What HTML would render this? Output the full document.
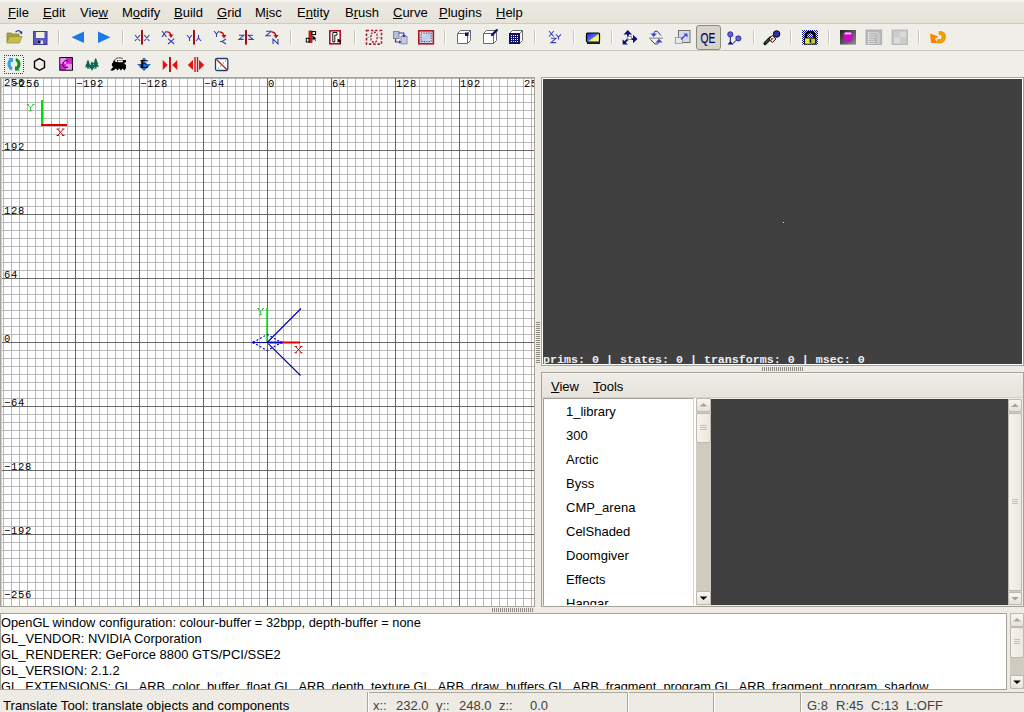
<!DOCTYPE html>
<html><head><meta charset="utf-8">
<style>
*{margin:0;padding:0;box-sizing:border-box}
html,body{width:1024px;height:712px;overflow:hidden;background:#eeebe5;font-family:"Liberation Sans",sans-serif;font-size:13px;color:#000}
.a{position:absolute}
#menubar{left:0;top:0;width:1024px;height:23px;background:linear-gradient(#ece9e2,#e5e2d9);border-top:2px solid #f4f2ec}
#menubar span,.mb span{position:absolute;line-height:16px;white-space:pre}
#menubar span{top:3px}
u{text-decoration:underline;text-underline-offset:1px;text-decoration-thickness:1px}
.tb{left:0;width:1024px;height:26px;background:#f0eee9}
.sep{position:absolute;width:2px;height:14px;border-left:1px solid #c5c2b8;border-right:1px solid #fff}
svg.ic{position:absolute;overflow:visible}
.gl{position:absolute;font-family:"Liberation Mono",monospace;font-size:10.5px;letter-spacing:0.7px;line-height:10px;height:10px;white-space:pre;color:#000}
.tl{position:absolute;left:22px;white-space:pre;line-height:16px}
.cl{position:absolute;left:0px;white-space:pre;line-height:16px;font-size:12.94px}
.sbb{border:1px solid #bdb9ae;border-radius:2px;background:linear-gradient(#f7f6f1,#e6e2d8)}
.sbt{border:1px solid #bdb9ae;border-radius:2px;background:linear-gradient(90deg,#f4f2ec,#ebe8df)}
.ti{position:absolute;left:566px;white-space:pre;line-height:16px}
.st{top:698px;white-space:pre;line-height:16px;color:#404040}
</style></head><body>
<div id="menubar" class="a">
<span style="left:8px"><u>F</u>ile</span>
<span style="left:43px"><u>E</u>dit</span>
<span style="left:80px">Vie<u>w</u></span>
<span style="left:122px">M<u>o</u>dify</span>
<span style="left:174px"><u>B</u>uild</span>
<span style="left:217px"><u>G</u>rid</span>
<span style="left:255px">M<u>i</u>sc</span>
<span style="left:297px">E<u>n</u>tity</span>
<span style="left:345px">B<u>r</u>ush</span>
<span style="left:393px"><u>C</u>urve</span>
<span style="left:439px"><u>P</u>lugins</span>
<span style="left:496px"><u>H</u>elp</span>
</div>
<div class="a" style="left:0;top:23px;width:1024px;height:1px;background:#cfccc2"></div>
<div id="tb1" class="a tb" style="top:24px"></div>
<div class="a" style="left:0;top:50px;width:1024px;height:1px;background:#c8c5bb"></div>
<div id="tb2" class="a tb" style="top:51px"></div>
<div class="a" style="left:696px;top:25px;width:25px;height:25px;border:1px solid #8d8a80;border-radius:3px;background:#d8d4c9"></div>
<svg class="a" style="left:0;top:0" width="1024" height="78">
<defs>
<pattern id="chk" width="2" height="2" patternUnits="userSpaceOnUse"><rect width="2" height="2" fill="#fff"/><rect width="1" height="1" fill="#1010a0"/><rect x="1" y="1" width="1" height="1" fill="#1010a0"/></pattern>
<pattern id="dots" width="2" height="2" patternUnits="userSpaceOnUse"><rect width="2" height="2" fill="#10106a"/><rect x="1" y="1" width="1" height="1" fill="#fff"/></pattern>
<linearGradient id="mon" x1="0" y1="0" x2="1" y2="1"><stop offset="0" stop-color="#1020e0"/><stop offset="0.5" stop-color="#5070f0"/><stop offset="0.55" stop-color="#f0f040"/><stop offset="1" stop-color="#fff"/></linearGradient>
<linearGradient id="cyl" x1="0" y1="0" x2="1" y2="1"><stop offset="0" stop-color="#202020"/><stop offset="1" stop-color="#909090"/></linearGradient>
<linearGradient id="redbox" x1="0" y1="0" x2="1" y2="1"><stop offset="0" stop-color="#e8f0f8"/><stop offset="0.5" stop-color="#b8cce8"/><stop offset="1" stop-color="#e0e8f4"/></linearGradient>
</defs>
<!-- separators tb1 -->
<g fill="#c9c6bc">
<rect x="58" y="30" width="1" height="14"/><rect x="122" y="30" width="1" height="14"/><rect x="290" y="30" width="1" height="14"/><rect x="354" y="30" width="1" height="14"/><rect x="444" y="30" width="1" height="14"/><rect x="534" y="30" width="1" height="14"/><rect x="573" y="30" width="1" height="14"/><rect x="611" y="30" width="1" height="14"/><rect x="753" y="30" width="1" height="14"/><rect x="790" y="30" width="1" height="14"/><rect x="828" y="30" width="1" height="14"/><rect x="918" y="30" width="1" height="14"/>
</g>
<g fill="#fff">
<rect x="59" y="30" width="1" height="14"/><rect x="123" y="30" width="1" height="14"/><rect x="291" y="30" width="1" height="14"/><rect x="355" y="30" width="1" height="14"/><rect x="445" y="30" width="1" height="14"/><rect x="535" y="30" width="1" height="14"/><rect x="574" y="30" width="1" height="14"/><rect x="612" y="30" width="1" height="14"/><rect x="754" y="30" width="1" height="14"/><rect x="791" y="30" width="1" height="14"/><rect x="829" y="30" width="1" height="14"/><rect x="919" y="30" width="1" height="14"/>
</g>
<!-- 1 open folder -->
<path d="M7,43 V33 H11.5 L12.5,34 H19 V36.5" fill="#a6a03a" stroke="#8c8630" stroke-width="0.8"/>
<path d="M7,43 L9.5,36.5 H22 L19.5,43 Z" fill="#c4be52" stroke="#9a942e" stroke-width="0.8"/>
<path d="M15.5,32.2 Q18.5,29.2 21,32" fill="none" stroke="#2038b0" stroke-width="1.2"/>
<path d="M19.3,32.6 L22.4,31.2 L22,34.4 Z" fill="#2038b0"/>
<!-- 2 floppy -->
<rect x="33.5" y="31.5" width="13.5" height="13" fill="#5a5ac4" stroke="#3c3c9a" stroke-width="1"/>
<rect x="36" y="32" width="8.5" height="6" fill="#f2f2dc"/>
<rect x="37.5" y="40.5" width="5.5" height="3.5" fill="#e8e8f0"/>
<rect x="37.5" y="40.5" width="3" height="3" fill="#101030"/>
<!-- back / fwd -->
<path d="M71.5,37.2 L84,31.5 V43 Z" fill="#1a7ae6"/>
<path d="M98,31.5 L110.5,37.2 L98,43 Z" fill="#1a7ae6"/>
<!-- flip/rot X Y Z -->
<g stroke="#3040b0" stroke-width="1.1" fill="none">
<path d="M135,35 L140,41 M140,35 L135,41 M144.3,35 L149.3,41 M149.3,35 L144.3,41"/>
<path d="M162,31 L166.4,36.8 M166.4,31 L162,36.8 M168,38.7 L174.2,44 M174.2,38.7 L168,44"/>
<path d="M187,35 L189.5,38 L192,35 M189.5,38 V41 M196,41 L198.5,38 L201,41 M198.5,38 V35"/>
<path d="M214,31 L216.5,34 L219,31 M216.5,34 V37 M226,39 L222,41.5 L226,44 M220,41.5 H222"/>
<path d="M239,35.3 H243.7 L239,39.4 H243.7 M253,35.3 H248.3 L253,39.4 H248.3"/>
<path d="M266,31.3 H271 L266,35.8 H271 M273,44 V39 L278,44 V39"/>
</g>
<g fill="#a01010">
<rect x="141" y="30" width="2" height="14.6"/><rect x="193" y="30" width="2" height="14.6"/><rect x="245" y="30" width="2" height="14.6"/>
</g>
<g fill="none" stroke="#c01010" stroke-width="1.3">
<path d="M166.5,32 Q170,31.5 171,35"/><path d="M219.5,32 Q223,32 224,35.5"/><path d="M271.5,32 Q275,32 276,35.5"/>
</g>
<g fill="#c01010">
<path d="M168.5,34.5 L173.5,34.5 L171,38 Z"/><path d="M221.5,35 L226.5,35 L224,38.5 Z"/><path d="M273.5,35 L278.5,35 L276,38.5 Z"/>
</g>
<!-- entity icons -->
<rect x="309" y="31" width="3" height="11.5" fill="#d02020" stroke="#a01010" stroke-width="0.8"/>
<rect x="312" y="31.6" width="3.6" height="3" fill="#fff" stroke="#000" stroke-width="1"/>
<rect x="306.3" y="38.3" width="2.7" height="3.7" fill="#fff" stroke="#000" stroke-width="1"/>
<path d="M312.5,35.5 V40.5 L314,39 L315.5,41 L316,40.5 L315,38.5 L316.5,38.5 Z" fill="#000"/>
<rect x="329.8" y="30.8" width="10.4" height="13" fill="#fff" stroke="#b01020" stroke-width="1.6"/>
<path d="M332.8,32.5 H337 V35.2 H334.8 V42 H332.8 Z" fill="#fff" stroke="#000" stroke-width="0.9"/>
<path d="M337.5,38.5 V43 L339,41.5 L340.5,43.5 L341.3,43 L340,41 L341.5,40.8 Z" fill="#000"/>
<!-- dashed select square -->
<rect x="366.5" y="30.5" width="15" height="13.6" fill="none" stroke="#a02030" stroke-width="1.6" stroke-dasharray="2.5 1.8"/>
<path d="M366.5,37.3 H381.5 M374,30.5 V44" stroke="#98a898" stroke-width="0.8"/>
<path d="M371,34 L372.5,32.5 H375.5 L377,34 V40.5 L375.5,42 H372.5 L371,40.5 Z" fill="#f8e8f0" stroke="#a02030" stroke-width="1.3" stroke-dasharray="2 1.5"/>
<!-- overlapping squares -->
<rect x="393.5" y="31.5" width="5.5" height="7" fill="#b8c0d8" stroke="#8088a8" stroke-width="1"/>
<rect x="401" y="36.5" width="6" height="7.3" fill="#c8cce0" stroke="#8890b0" stroke-width="1"/>
<path d="M398.5,33 H403.8 V35.5 M395.5,39 V42 H399.5" fill="none" stroke="#3030d0" stroke-width="1.2"/>
<path d="M402,35 H406 L404,37.5 Z M399,40.2 V43.8 L401.5,42 Z" fill="#3030d0"/>
<!-- red box -->
<rect x="418.8" y="30.8" width="14.6" height="13" fill="url(#redbox)" stroke="#b01828" stroke-width="1.6"/>
<rect x="421" y="33" width="10.2" height="8.6" fill="none" stroke="#a01828" stroke-width="1" stroke-dasharray="1.2 1.3"/>
<!-- cubes -->
<g fill="#fff" stroke="#6c6c6c" stroke-width="1"><path d="M457.5,33.5 H467.5 V43.5 H457.5 Z M457.5,33.5 L460.5,30.5 H470.5 L467.5,33.5 M467.5,43.5 L470.5,40.5 V30.5"/><path d="M483.5,33.5 H493.5 V43.5 H483.5 Z M483.5,33.5 L486.5,30.5 H496.5 L493.5,33.5 M493.5,43.5 L496.5,40.5 V30.5"/><path d="M509.5,33.5 H519.5 V43.5 H509.5 Z M509.5,33.5 L512.5,30.5 H522.5 L519.5,33.5 M519.5,43.5 L522.5,40.5 V30.5"/></g>
<rect x="465" y="32.5" width="3.5" height="3.5" fill="#10106a"/>
<path d="M492,35 L496.8,30.2" stroke="#10106a" stroke-width="2.4" stroke-linecap="round"/>
<rect x="509" y="33" width="11" height="11" fill="#10106a"/><rect x="510" y="34" width="9" height="9" fill="url(#dots)"/>
<!-- XZY -->
<path d="M549,31 L553.7,36.5 M553.7,31 L549,36.5 M556,34.3 L558.5,37 L561,34.3 M558.5,37 V39.6 M551,38.2 H556 L551,42.6 H556" fill="none" stroke="#3a40b8" stroke-width="1.1"/>
<!-- monitor -->
<rect x="586.5" y="33" width="13" height="9" rx="1" fill="url(#mon)" stroke="#000" stroke-width="1.2"/>
<rect x="587" y="42.3" width="13" height="1.6" fill="#000"/>
<!-- translate -->
<g fill="#10107a">
<path d="M623.5,34.5 L627.8,30 L632,34.5 Z"/><rect x="627" y="34" width="1.8" height="3"/>
<path d="M633,34.8 L637.5,39 L633,43.2 Z"/><rect x="630.5" y="38.2" width="3" height="1.8"/>
<path d="M622.6,39.2 V44.4 H627.8 Z"/><path d="M624,43 L628,39" stroke="#10107a" stroke-width="1.8"/>
</g>
<rect x="627.6" y="36.3" width="3.8" height="3" fill="#fff" stroke="#808080" stroke-width="0.9"/>
<!-- rotate -->
<path d="M649,38.2 H663" stroke="#909090" stroke-width="1.2"/>
<path d="M653.5,34 Q654,30.5 657,31 L661,35.5 M659,42 Q658,45 655,44 L650.5,39.5" fill="none" stroke="#202080" stroke-width="0.9"/>
<path d="M650.5,33.5 H657 L653.7,37 Z M655.5,42.5 H662.5 L659,38.8 Z" fill="#3848d8"/>
<!-- scale -->
<rect x="678.5" y="30.5" width="11.5" height="12" fill="#d4dae8" stroke="#707070" stroke-width="1"/>
<rect x="675.3" y="37.5" width="7.2" height="5.8" fill="#e8e8ee" stroke="#909090" stroke-width="0.8"/>
<path d="M681,39.5 L686,34.5" stroke="#4040e0" stroke-width="1.3"/>
<path d="M683.5,33.5 H687.5 V37.5 Z" fill="#4040e0"/>
<!-- QE -->
<text transform="translate(700.5,42.6) scale(0.68,1)" x="0" y="0" font-family="Liberation Sans" font-size="15" fill="#000070" stroke="#000070" stroke-width="0.2">QE</text>
<!-- vertex -->
<path d="M730.3,34.3 V42.5 M738.4,38.4 L732.5,43.8" stroke="#101070" stroke-width="1"/>
<path d="M730.3,34.3 L738.4,38.4" stroke="#c0c0e8" stroke-width="0.8"/>
<circle cx="730.3" cy="34.3" r="2.6" fill="#6060e0" stroke="#202090" stroke-width="0.8"/>
<circle cx="738.4" cy="38.4" r="2.6" fill="#6060e0" stroke="#202090" stroke-width="0.8"/>
<path d="M727.5,44.6 L730.4,41.3 L733.5,44.6 Z" fill="#101080"/>
<!-- wand -->
<path d="M765,43.5 L770.5,38" stroke="#102010" stroke-width="3.2" stroke-linecap="round"/>
<path d="M765.2,43.3 L770,38.5" stroke="#50a070" stroke-width="0.8"/>
<circle cx="776.6" cy="34" r="3.3" fill="#3030a0" stroke="#000" stroke-width="0.9"/>
<path d="M768.8,39 L772.3,35.5 L775.8,39 L772.3,42.5 Z" fill="#fff" stroke="#000" stroke-width="1"/>
<path d="M770.6,38.2 L773.8,38.2 L770.6,41.2 Z" fill="#e01010"/>
<!-- lock -->
<rect x="802" y="30" width="16" height="14.6" fill="url(#chk)"/>
<path d="M804.6,38.5 V35.5 Q804.6,30.8 810.2,30.8 Q815.8,30.8 815.8,35.5 V38.5 Z" fill="#000"/>
<path d="M807.2,38.5 V36 Q807.2,33.2 810.2,33.2 Q813.2,33.2 813.2,36 V38.5 Z" fill="url(#chk)"/>
<rect x="804" y="37.6" width="12.4" height="7" fill="#000"/>
<rect x="805.2" y="38.6" width="10" height="5" fill="#c8c840"/>
<rect x="805.2" y="38.6" width="5" height="5" fill="#e4e848"/>
<rect x="809.6" y="39.2" width="1.6" height="3.4" fill="#000"/>
<!-- purple cylinder -->
<rect x="840" y="30" width="16" height="14.6" fill="url(#cyl)"/>
<path d="M843.5,33.5 V40.5 Q848,44 852.5,40.5 V33.5 Z" fill="#c010c0"/>
<ellipse cx="848" cy="33.5" rx="4.5" ry="1.6" fill="#e040e0"/>
<rect x="845" y="32.6" width="6" height="1.6" fill="#ffc0ff"/>
<!-- gray list -->
<rect x="866" y="30" width="15.7" height="14.6" fill="#b8b8b8" stroke="#a8a8a8" stroke-width="0.8"/>
<g fill="#f4f4f4"><rect x="868" y="32" width="1.4" height="1.4"/><rect x="868" y="34.2" width="1.4" height="1.4"/><rect x="868" y="36.4" width="1.4" height="1.4"/><rect x="868" y="38.6" width="1.4" height="1.4"/><rect x="868" y="40.8" width="1.4" height="1.4"/><rect x="868" y="43" width="1.4" height="1"/></g>
<g fill="#d8d8d8"><rect x="870" y="32.2" width="8" height="1"/><rect x="870" y="34.4" width="5" height="1"/><rect x="870" y="36.6" width="6" height="1"/><rect x="870" y="38.8" width="4" height="1"/><rect x="870" y="41" width="5" height="1"/><rect x="870" y="43" width="6" height="1"/></g>
<rect x="877" y="33" width="3" height="11" fill="#c8c8c8"/>
<!-- gray squares -->
<rect x="892" y="30" width="15.6" height="14.6" fill="#c4c4c4" stroke="#b4b4b4" stroke-width="0.8"/>
<rect x="894" y="31.5" width="6" height="6" fill="#cdcdcd"/><rect x="900" y="31.5" width="6" height="6" fill="#dadada"/>
<rect x="894" y="37.5" width="6" height="6" fill="#dcdcdc"/><rect x="900" y="37.5" width="6" height="6" fill="#cccccc"/>
<!-- orange refresh -->
<path d="M939,31.5 Q946,31 945.5,37.5 Q945,44 937,43 L937.5,39.5 Q942,40 942,37 Q942,34 939,34.5 Z" fill="#f0a000" stroke="#e08000" stroke-width="0.6"/>
<path d="M930,33.5 L938.5,36.5 L935,39 L937.5,43 L931,43 Z" fill="#ff8400"/>
<!-- ============ TOOLBAR 2 ============ -->
<g fill="#404040"><rect x="4" y="55" width="1" height="1"/><rect x="4" y="73" width="1" height="1"/><rect x="6" y="55" width="1" height="1"/><rect x="6" y="73" width="1" height="1"/><rect x="8" y="55" width="1" height="1"/><rect x="8" y="73" width="1" height="1"/><rect x="10" y="55" width="1" height="1"/><rect x="10" y="73" width="1" height="1"/><rect x="12" y="55" width="1" height="1"/><rect x="12" y="73" width="1" height="1"/><rect x="14" y="55" width="1" height="1"/><rect x="14" y="73" width="1" height="1"/><rect x="16" y="55" width="1" height="1"/><rect x="16" y="73" width="1" height="1"/><rect x="18" y="55" width="1" height="1"/><rect x="18" y="73" width="1" height="1"/><rect x="20" y="55" width="1" height="1"/><rect x="20" y="73" width="1" height="1"/><rect x="22" y="55" width="1" height="1"/><rect x="22" y="73" width="1" height="1"/><rect x="4" y="57" width="1" height="1"/><rect x="23" y="57" width="1" height="1"/><rect x="4" y="59" width="1" height="1"/><rect x="23" y="59" width="1" height="1"/><rect x="4" y="61" width="1" height="1"/><rect x="23" y="61" width="1" height="1"/><rect x="4" y="63" width="1" height="1"/><rect x="23" y="63" width="1" height="1"/><rect x="4" y="65" width="1" height="1"/><rect x="23" y="65" width="1" height="1"/><rect x="4" y="67" width="1" height="1"/><rect x="23" y="67" width="1" height="1"/><rect x="4" y="69" width="1" height="1"/><rect x="23" y="69" width="1" height="1"/><rect x="4" y="71" width="1" height="1"/><rect x="23" y="71" width="1" height="1"/></g>
<path d="M11.5,58 Q7,60 7.5,64.5 Q8,68.5 11.5,70.5 L12.5,67.5 Q10.5,66 10.5,64 Q10.5,62 12.5,61 Z" fill="#30a0e0"/>
<path d="M8.5,58 H13 V62.5 Z" fill="#30a0e0"/>
<path d="M16,58 Q20.5,59.5 20.5,64 Q20.5,68.5 16.5,70.5 L15.5,67.5 Q17.5,66 17.5,64 Q17.5,62 15.5,61 Z" fill="#109020"/>
<path d="M20,70.5 H15 V66 Z" fill="#109020"/>
<path d="M39.5,58.6 L44.5,61.4 V67.5 L39.5,70.3 L34.5,67.5 V61.4 Z" fill="none" stroke="#000" stroke-width="1.4"/>
<rect x="59.8" y="57.6" width="12.6" height="12.6" fill="#e020e0" stroke="#000" stroke-width="1"/>
<rect x="60.3" y="58.1" width="5.8" height="5.8" fill="#f090f0"/><rect x="66.1" y="63.9" width="5.8" height="5.8" fill="#f090f0"/>
<path d="M68,61 Q65,59.5 63.5,62 Q62,64.5 63.5,66.5 Q65,68.5 68,67" fill="none" stroke="#000" stroke-width="1"/>
<path d="M88.0,59.8 L89.6,62.6 L88.8,62.6 L90.7,65.6 L89.6,65.6 L91.3,67.2 L88.8,67.2 L88.8,68.8 L87.2,68.8 L87.2,67.2 L84.7,67.2 L86.4,65.6 L85.3,65.6 L87.2,62.6 L86.4,62.6 Z M92.0,61.3 L93.6,64.1 L92.8,64.1 L94.7,67.1 L93.6,67.1 L95.3,68.6 L92.8,68.6 L92.8,70.2 L91.2,70.2 L91.2,68.6 L88.7,68.6 L90.4,67.1 L89.3,67.1 L91.2,64.1 L90.4,64.1 Z M95.7,58.0 L97.3,60.8 L96.5,60.8 L98.4,63.8 L97.3,63.8 L99.0,66.8 L96.5,66.8 L96.5,68.4 L94.9,68.4 L94.9,66.8 L92.4,66.8 L94.1,63.8 L93.0,63.8 L94.9,60.8 L94.1,60.8 Z" fill="#0f6454"/>
<path d="M110.2,70.6 L113.5,66.5 L112,66.2 L111.8,63.8 L113.2,62.2 L113.5,60.5 L115.2,60.2 V62 H117 V60 H126 V62.5 H124.5 V64.5 H126 V68 L124.5,70.5 L122.5,68.5 L121,70.5 L119,68.5 L117.5,70.5 L115.8,68.5 L113.5,70.6 Z" fill="#000"/>
<rect x="117.6" y="60.4" width="5.2" height="1.8" fill="#f4f4f0"/>
<path d="M114.3,60.5 Q115.5,57.8 118.5,57.8 Q121,57.6 122.8,58.6" fill="none" stroke="#404040" stroke-width="0.9"/>
<path d="M137,64 L144,70.9 L151,64 Z" fill="#2468c8"/>
<rect x="142.5" y="58" width="3" height="8" fill="#3a70c8"/><text x="139.8" y="67.7" font-family="Liberation Serif" font-size="13.4" font-weight="bold" fill="#000">E</text>
<rect x="169" y="57" width="2" height="15" fill="#c01818"/>
<path d="M162.7,60 L167.8,65 L162.7,70 Z M177.3,60 L172.2,65 L177.3,70 Z" fill="#e81010"/>
<path d="M187.8,65 L193,60 V70 Z M204.2,65 L199,60 V70 Z" fill="#e81010"/>
<rect x="194.3" y="57" width="1.4" height="15" fill="#c01818"/><rect x="196.8" y="57" width="1.4" height="15" fill="#c01818"/>
<rect x="215.5" y="58.5" width="12.3" height="12" rx="1.5" fill="#fff" stroke="#283a78" stroke-width="1.3"/>
<path d="M216.5,59.5 L227,69.8" stroke="#c01818" stroke-width="1.2"/>
<g fill="#309030"><rect x="225" y="60.5" width="1" height="1"/><rect x="223" y="62.5" width="1" height="1"/><rect x="220" y="65.5" width="1" height="1"/><rect x="218" y="67.5" width="1" height="1"/></g>
</svg>
<div class="a" style="left:0;top:77px;width:535px;height:530px;border:1px solid #a5a29a;background:#fff"></div>
<div class="a" style="left:1px;top:78px;width:1px;height:528px;background:#d0cdc4"></div>
<div class="a" style="left:2px;top:78px;width:532px;height:528px;overflow:hidden;background:#fff">
<svg class="a" style="left:0;top:0" width="532" height="528">
<rect x="1" y="0" width="1" height="528" fill="#b8b8b8"/>
<rect x="9" y="0" width="1" height="528" fill="#b8b8b8"/>
<rect x="17" y="0" width="1" height="528" fill="#b8b8b8"/>
<rect x="25" y="0" width="1" height="528" fill="#b8b8b8"/>
<rect x="33" y="0" width="1" height="528" fill="#b8b8b8"/>
<rect x="41" y="0" width="1" height="528" fill="#b8b8b8"/>
<rect x="49" y="0" width="1" height="528" fill="#b8b8b8"/>
<rect x="57" y="0" width="1" height="528" fill="#b8b8b8"/>
<rect x="65" y="0" width="1" height="528" fill="#b8b8b8"/>
<rect x="81" y="0" width="1" height="528" fill="#b8b8b8"/>
<rect x="89" y="0" width="1" height="528" fill="#b8b8b8"/>
<rect x="97" y="0" width="1" height="528" fill="#b8b8b8"/>
<rect x="105" y="0" width="1" height="528" fill="#b8b8b8"/>
<rect x="113" y="0" width="1" height="528" fill="#b8b8b8"/>
<rect x="121" y="0" width="1" height="528" fill="#b8b8b8"/>
<rect x="129" y="0" width="1" height="528" fill="#b8b8b8"/>
<rect x="145" y="0" width="1" height="528" fill="#b8b8b8"/>
<rect x="153" y="0" width="1" height="528" fill="#b8b8b8"/>
<rect x="161" y="0" width="1" height="528" fill="#b8b8b8"/>
<rect x="169" y="0" width="1" height="528" fill="#b8b8b8"/>
<rect x="177" y="0" width="1" height="528" fill="#b8b8b8"/>
<rect x="185" y="0" width="1" height="528" fill="#b8b8b8"/>
<rect x="193" y="0" width="1" height="528" fill="#b8b8b8"/>
<rect x="209" y="0" width="1" height="528" fill="#b8b8b8"/>
<rect x="217" y="0" width="1" height="528" fill="#b8b8b8"/>
<rect x="225" y="0" width="1" height="528" fill="#b8b8b8"/>
<rect x="233" y="0" width="1" height="528" fill="#b8b8b8"/>
<rect x="241" y="0" width="1" height="528" fill="#b8b8b8"/>
<rect x="249" y="0" width="1" height="528" fill="#b8b8b8"/>
<rect x="257" y="0" width="1" height="528" fill="#b8b8b8"/>
<rect x="273" y="0" width="1" height="528" fill="#b8b8b8"/>
<rect x="281" y="0" width="1" height="528" fill="#b8b8b8"/>
<rect x="289" y="0" width="1" height="528" fill="#b8b8b8"/>
<rect x="297" y="0" width="1" height="528" fill="#b8b8b8"/>
<rect x="305" y="0" width="1" height="528" fill="#b8b8b8"/>
<rect x="313" y="0" width="1" height="528" fill="#b8b8b8"/>
<rect x="321" y="0" width="1" height="528" fill="#b8b8b8"/>
<rect x="337" y="0" width="1" height="528" fill="#b8b8b8"/>
<rect x="345" y="0" width="1" height="528" fill="#b8b8b8"/>
<rect x="353" y="0" width="1" height="528" fill="#b8b8b8"/>
<rect x="361" y="0" width="1" height="528" fill="#b8b8b8"/>
<rect x="369" y="0" width="1" height="528" fill="#b8b8b8"/>
<rect x="377" y="0" width="1" height="528" fill="#b8b8b8"/>
<rect x="385" y="0" width="1" height="528" fill="#b8b8b8"/>
<rect x="401" y="0" width="1" height="528" fill="#b8b8b8"/>
<rect x="409" y="0" width="1" height="528" fill="#b8b8b8"/>
<rect x="417" y="0" width="1" height="528" fill="#b8b8b8"/>
<rect x="425" y="0" width="1" height="528" fill="#b8b8b8"/>
<rect x="433" y="0" width="1" height="528" fill="#b8b8b8"/>
<rect x="441" y="0" width="1" height="528" fill="#b8b8b8"/>
<rect x="449" y="0" width="1" height="528" fill="#b8b8b8"/>
<rect x="465" y="0" width="1" height="528" fill="#b8b8b8"/>
<rect x="473" y="0" width="1" height="528" fill="#b8b8b8"/>
<rect x="481" y="0" width="1" height="528" fill="#b8b8b8"/>
<rect x="489" y="0" width="1" height="528" fill="#b8b8b8"/>
<rect x="497" y="0" width="1" height="528" fill="#b8b8b8"/>
<rect x="505" y="0" width="1" height="528" fill="#b8b8b8"/>
<rect x="513" y="0" width="1" height="528" fill="#b8b8b8"/>
<rect x="521" y="0" width="1" height="528" fill="#b8b8b8"/>
<rect x="529" y="0" width="1" height="528" fill="#b8b8b8"/>
<rect x="0" y="0" width="532" height="1" fill="#b8b8b8"/>
<rect x="0" y="8" width="532" height="1" fill="#b8b8b8"/>
<rect x="0" y="16" width="532" height="1" fill="#b8b8b8"/>
<rect x="0" y="24" width="532" height="1" fill="#b8b8b8"/>
<rect x="0" y="32" width="532" height="1" fill="#b8b8b8"/>
<rect x="0" y="40" width="532" height="1" fill="#b8b8b8"/>
<rect x="0" y="48" width="532" height="1" fill="#b8b8b8"/>
<rect x="0" y="56" width="532" height="1" fill="#b8b8b8"/>
<rect x="0" y="64" width="532" height="1" fill="#b8b8b8"/>
<rect x="0" y="80" width="532" height="1" fill="#b8b8b8"/>
<rect x="0" y="88" width="532" height="1" fill="#b8b8b8"/>
<rect x="0" y="96" width="532" height="1" fill="#b8b8b8"/>
<rect x="0" y="104" width="532" height="1" fill="#b8b8b8"/>
<rect x="0" y="112" width="532" height="1" fill="#b8b8b8"/>
<rect x="0" y="120" width="532" height="1" fill="#b8b8b8"/>
<rect x="0" y="128" width="532" height="1" fill="#b8b8b8"/>
<rect x="0" y="144" width="532" height="1" fill="#b8b8b8"/>
<rect x="0" y="152" width="532" height="1" fill="#b8b8b8"/>
<rect x="0" y="160" width="532" height="1" fill="#b8b8b8"/>
<rect x="0" y="168" width="532" height="1" fill="#b8b8b8"/>
<rect x="0" y="176" width="532" height="1" fill="#b8b8b8"/>
<rect x="0" y="184" width="532" height="1" fill="#b8b8b8"/>
<rect x="0" y="192" width="532" height="1" fill="#b8b8b8"/>
<rect x="0" y="208" width="532" height="1" fill="#b8b8b8"/>
<rect x="0" y="216" width="532" height="1" fill="#b8b8b8"/>
<rect x="0" y="224" width="532" height="1" fill="#b8b8b8"/>
<rect x="0" y="232" width="532" height="1" fill="#b8b8b8"/>
<rect x="0" y="240" width="532" height="1" fill="#b8b8b8"/>
<rect x="0" y="248" width="532" height="1" fill="#b8b8b8"/>
<rect x="0" y="256" width="532" height="1" fill="#b8b8b8"/>
<rect x="0" y="272" width="532" height="1" fill="#b8b8b8"/>
<rect x="0" y="280" width="532" height="1" fill="#b8b8b8"/>
<rect x="0" y="288" width="532" height="1" fill="#b8b8b8"/>
<rect x="0" y="296" width="532" height="1" fill="#b8b8b8"/>
<rect x="0" y="304" width="532" height="1" fill="#b8b8b8"/>
<rect x="0" y="312" width="532" height="1" fill="#b8b8b8"/>
<rect x="0" y="320" width="532" height="1" fill="#b8b8b8"/>
<rect x="0" y="336" width="532" height="1" fill="#b8b8b8"/>
<rect x="0" y="344" width="532" height="1" fill="#b8b8b8"/>
<rect x="0" y="352" width="532" height="1" fill="#b8b8b8"/>
<rect x="0" y="360" width="532" height="1" fill="#b8b8b8"/>
<rect x="0" y="368" width="532" height="1" fill="#b8b8b8"/>
<rect x="0" y="376" width="532" height="1" fill="#b8b8b8"/>
<rect x="0" y="384" width="532" height="1" fill="#b8b8b8"/>
<rect x="0" y="400" width="532" height="1" fill="#b8b8b8"/>
<rect x="0" y="408" width="532" height="1" fill="#b8b8b8"/>
<rect x="0" y="416" width="532" height="1" fill="#b8b8b8"/>
<rect x="0" y="424" width="532" height="1" fill="#b8b8b8"/>
<rect x="0" y="432" width="532" height="1" fill="#b8b8b8"/>
<rect x="0" y="440" width="532" height="1" fill="#b8b8b8"/>
<rect x="0" y="448" width="532" height="1" fill="#b8b8b8"/>
<rect x="0" y="464" width="532" height="1" fill="#b8b8b8"/>
<rect x="0" y="472" width="532" height="1" fill="#b8b8b8"/>
<rect x="0" y="480" width="532" height="1" fill="#b8b8b8"/>
<rect x="0" y="488" width="532" height="1" fill="#b8b8b8"/>
<rect x="0" y="496" width="532" height="1" fill="#b8b8b8"/>
<rect x="0" y="504" width="532" height="1" fill="#b8b8b8"/>
<rect x="0" y="512" width="532" height="1" fill="#b8b8b8"/>
<rect x="0" y="520" width="532" height="1" fill="#b8b8b8"/>
<rect x="0" y="528" width="532" height="1" fill="#b8b8b8"/>
<rect x="73" y="0" width="1" height="528" fill="#666666"/>
<rect x="137" y="0" width="1" height="528" fill="#666666"/>
<rect x="201" y="0" width="1" height="528" fill="#666666"/>
<rect x="265" y="0" width="1" height="528" fill="#666666"/>
<rect x="329" y="0" width="1" height="528" fill="#666666"/>
<rect x="393" y="0" width="1" height="528" fill="#666666"/>
<rect x="457" y="0" width="1" height="528" fill="#666666"/>
<rect x="0" y="72" width="532" height="1" fill="#666666"/>
<rect x="0" y="136" width="532" height="1" fill="#666666"/>
<rect x="0" y="200" width="532" height="1" fill="#666666"/>
<rect x="0" y="264" width="532" height="1" fill="#666666"/>
<rect x="0" y="328" width="532" height="1" fill="#666666"/>
<rect x="0" y="392" width="532" height="1" fill="#666666"/>
<rect x="0" y="456" width="532" height="1" fill="#666666"/>
</svg>
<div class="gl" style="left:10px;top:1px">−256</div>
<div class="gl" style="left:74px;top:1px">−192</div>
<div class="gl" style="left:138px;top:1px">−128</div>
<div class="gl" style="left:202px;top:1px">−64</div>
<div class="gl" style="left:266px;top:1px">0</div>
<div class="gl" style="left:330px;top:1px">64</div>
<div class="gl" style="left:394px;top:1px">128</div>
<div class="gl" style="left:458px;top:1px">192</div>
<div class="gl" style="left:522px;top:1px">256</div>
<div class="gl" style="left:2px;top:512px">−256</div>
<div class="gl" style="left:2px;top:448px">−192</div>
<div class="gl" style="left:2px;top:384px">−128</div>
<div class="gl" style="left:2px;top:320px">−64</div>
<div class="gl" style="left:2px;top:256px">0</div>
<div class="gl" style="left:2px;top:192px">64</div>
<div class="gl" style="left:2px;top:128px">128</div>
<div class="gl" style="left:2px;top:64px">192</div>
<div class="gl" style="left:2px;top:0px">256</div>
<svg class="a" style="left:0;top:0" width="531" height="528"><g transform="translate(-2,-78)">
<!-- view axis indicator -->
<rect x="41" y="100" width="2" height="25" fill="#00e000"/>
<rect x="41" y="124" width="26" height="2" fill="#e00000"/>
<path d="M27.5,104.5 L30.5,107.8 L33.5,104.5 M30.5,107.8 V110.8 M29,110.8 H32 M26.8,104.5 H28.8 M32.5,104.5 H34.5" fill="none" stroke="#20d020" stroke-width="1"/>
<path d="M57.5,129 L63.5,135.5 M63.5,129 L57.5,135.5 M56.5,129 H59 M62,129 H64.5 M56.5,135.5 H59 M62,135.5 H64.5" fill="none" stroke="#d01010" stroke-width="1"/>
<!-- origin axes -->
<rect x="266.3" y="308" width="1.8" height="34.5" fill="#00e000"/>
<rect x="267" y="341.5" width="33" height="2" fill="#e00000"/>
<path d="M258,308.5 L260.7,311.5 L263.4,308.5 M260.7,311.5 V314.8 M259.3,314.8 H262.1 M257.3,308.5 H259 M262.4,308.5 H264" fill="none" stroke="#20d020" stroke-width="1"/>
<path d="M295.5,346.5 L301.5,352.8 M301.5,346.5 L295.5,352.8 M294.5,346.5 H297 M300,346.5 H302.5 M294.5,352.8 H297 M300,352.8 H302.5" fill="none" stroke="#d01010" stroke-width="1"/>
<!-- camera -->
<g stroke="#0000b0" fill="none" stroke-width="1.1">
<path d="M253,342.5 H282"/>
<path d="M253,342.5 L267.2,334.5 L281.6,342.5 L267.2,350.5 Z" stroke-dasharray="2 2"/>
<path d="M267.2,342.5 L301,308.5 M268.5,343.8 L300.5,375.5"/>
</g>
<circle cx="253.5" cy="342.5" r="1.2" fill="#0000c0"/><circle cx="281.3" cy="342.5" r="1.2" fill="#0000c0"/>
</g></svg>

</div><!-- CAMERA -->
<div class="a" style="left:541px;top:77px;width:483px;height:289px;border:1px solid #a5a29a;background:#fff"></div>
<div class="a" style="left:543px;top:79px;width:479px;height:285px;background:#404040"></div>
<div class="a" style="left:783px;top:222px;width:1px;height:1px;background:#e0e0e0"></div>
<div class="a" style="left:543px;top:354px;font-family:'Liberation Mono',monospace;font-size:11.67px;font-weight:bold;line-height:12px;color:#f0f0f0;white-space:pre">prims: 0 | states: 0 | transforms: 0 | msec: 0</div>
<!-- TEXTURE BROWSER -->
<div class="a" style="left:541px;top:372px;width:483px;height:235px;border:1px solid #a5a29a;background:#eeebe5"></div>
<div class="a" style="left:542px;top:373px;width:481px;height:25px;background:linear-gradient(#eeece6,#e6e3dc);border-bottom:1px solid #d3d0c6;border-top:1px solid #f6f5f0"></div>
<div class="a mb" style="left:0;top:0">
<span style="left:551px;top:379px"><u>V</u>iew</span>
<span style="left:593px;top:379px"><u>T</u>ools</span>
</div>
<div class="a" style="left:694px;top:398px;width:2px;height:208px;background:#fff"></div><div class="a" style="left:543px;top:398px;width:151px;height:208px;border:1px solid #a29f95;border-right-color:#d8d5cc;border-bottom-color:#fff;background:#fff;overflow:hidden">
<div class="ti" style="left:22px;top:5px">1_library</div>
<div class="ti" style="left:22px;top:29px">300</div>
<div class="ti" style="left:22px;top:53px">Arctic</div>
<div class="ti" style="left:22px;top:77px">Byss</div>
<div class="ti" style="left:22px;top:101px">CMP_arena</div>
<div class="ti" style="left:22px;top:125px">CelShaded</div>
<div class="ti" style="left:22px;top:149px">Doomgiver</div>
<div class="ti" style="left:22px;top:173px">Effects</div>
<div class="ti" style="left:22px;top:197px">Hangar</div>
</div>
<div class="a" style="left:696px;top:398px;width:15px;height:207px;background:#cfcbc0"></div>
<div class="a sbb" style="left:696px;top:398px;width:15px;height:14px"></div>
<svg class="a" style="left:696px;top:398px" width="15" height="14"><path d="M3.7,8.5 L7.5,5.0 L11.3,8.5Z" fill="#a8a49a"/></svg>
<div class="a sbb" style="left:696px;top:591px;width:15px;height:14px"></div>
<svg class="a" style="left:696px;top:591px" width="15" height="14"><path d="M3.7,5.5 L7.5,9.0 L11.3,5.5Z" fill="#000"/></svg>
<div class="a sbt" style="left:696px;top:413px;width:15px;height:30px"></div>
<div class="a" style="left:700px;top:425px;width:7px;height:1px;background:#c4c0b5"></div>
<div class="a" style="left:700px;top:427px;width:7px;height:1px;background:#c4c0b5"></div>
<div class="a" style="left:700px;top:429px;width:7px;height:1px;background:#c4c0b5"></div>
<div class="a" style="left:711px;top:399px;width:297px;height:206px;background:#404040"></div>
<div class="a" style="left:1008px;top:399px;width:14px;height:206px;background:#cfcbc0"></div>
<div class="a sbb" style="left:1008px;top:399px;width:14px;height:13px"></div>
<svg class="a" style="left:1008px;top:399px" width="14" height="13"><path d="M3.2,8.0 L7.0,4.5 L10.8,8.0Z" fill="#a8a49a"/></svg>
<div class="a sbb" style="left:1008px;top:592px;width:14px;height:13px"></div>
<svg class="a" style="left:1008px;top:592px" width="14" height="13"><path d="M3.2,5.0 L7.0,8.5 L10.8,5.0Z" fill="#a8a49a"/></svg>
<div class="a sbt" style="left:1008px;top:413px;width:14px;height:178px"></div>
<div class="a" style="left:1012px;top:499px;width:6px;height:1px;background:#c4c0b5"></div>
<div class="a" style="left:1012px;top:501px;width:6px;height:1px;background:#c4c0b5"></div>
<div class="a" style="left:1012px;top:503px;width:6px;height:1px;background:#c4c0b5"></div>
<!-- splitter grips -->
<svg class="a" style="left:0;top:0" width="1024" height="712">
<g fill="#8e8b82">
<rect x="536" y="322" width="4" height="1"/><rect x="536" y="324" width="4" height="1"/><rect x="536" y="326" width="4" height="1"/><rect x="536" y="328" width="4" height="1"/><rect x="536" y="330" width="4" height="1"/><rect x="536" y="332" width="4" height="1"/><rect x="536" y="334" width="4" height="1"/><rect x="536" y="336" width="4" height="1"/><rect x="536" y="338" width="4" height="1"/><rect x="536" y="340" width="4" height="1"/><rect x="536" y="342" width="4" height="1"/><rect x="536" y="344" width="4" height="1"/><rect x="536" y="346" width="4" height="1"/><rect x="536" y="348" width="4" height="1"/><rect x="536" y="350" width="4" height="1"/><rect x="536" y="352" width="4" height="1"/><rect x="536" y="354" width="4" height="1"/><rect x="536" y="356" width="4" height="1"/><rect x="536" y="358" width="4" height="1"/><rect x="536" y="360" width="4" height="1"/><rect x="536" y="362" width="4" height="1"/><rect x="492" y="608" width="1" height="4"/><rect x="494" y="608" width="1" height="4"/><rect x="496" y="608" width="1" height="4"/><rect x="498" y="608" width="1" height="4"/><rect x="500" y="608" width="1" height="4"/><rect x="502" y="608" width="1" height="4"/><rect x="504" y="608" width="1" height="4"/><rect x="506" y="608" width="1" height="4"/><rect x="508" y="608" width="1" height="4"/><rect x="510" y="608" width="1" height="4"/><rect x="512" y="608" width="1" height="4"/><rect x="514" y="608" width="1" height="4"/><rect x="516" y="608" width="1" height="4"/><rect x="518" y="608" width="1" height="4"/><rect x="520" y="608" width="1" height="4"/><rect x="522" y="608" width="1" height="4"/><rect x="524" y="608" width="1" height="4"/><rect x="526" y="608" width="1" height="4"/><rect x="528" y="608" width="1" height="4"/><rect x="530" y="608" width="1" height="4"/><rect x="532" y="608" width="1" height="4"/><rect x="762" y="367" width="1" height="4"/><rect x="764" y="367" width="1" height="4"/><rect x="766" y="367" width="1" height="4"/><rect x="768" y="367" width="1" height="4"/><rect x="770" y="367" width="1" height="4"/><rect x="772" y="367" width="1" height="4"/><rect x="774" y="367" width="1" height="4"/><rect x="776" y="367" width="1" height="4"/><rect x="778" y="367" width="1" height="4"/><rect x="780" y="367" width="1" height="4"/><rect x="782" y="367" width="1" height="4"/><rect x="784" y="367" width="1" height="4"/><rect x="786" y="367" width="1" height="4"/><rect x="788" y="367" width="1" height="4"/><rect x="790" y="367" width="1" height="4"/><rect x="792" y="367" width="1" height="4"/><rect x="794" y="367" width="1" height="4"/><rect x="796" y="367" width="1" height="4"/><rect x="798" y="367" width="1" height="4"/><rect x="800" y="367" width="1" height="4"/><rect x="802" y="367" width="1" height="4"/></g></svg>
<div class="a" style="left:0;top:613px;width:1007px;height:77px;border:1px solid #a5a29a;background:#fff;overflow:hidden">
<div class="cl" style="top:1px;font-size:12.83px">OpenGL window configuration: colour-buffer = 32bpp, depth-buffer = none</div>
<div class="cl" style="top:17px">GL_VENDOR: NVIDIA Corporation</div>
<div class="cl" style="top:33px;font-size:12.97px">GL_RENDERER: GeForce 8800 GTS/PCI/SSE2</div>
<div class="cl" style="top:49px">GL_VERSION: 2.1.2</div>
<div class="cl" style="top:65px;font-size:12.79px">GL_EXTENSIONS: GL_ARB_color_buffer_float GL_ARB_depth_texture GL_ARB_draw_buffers GL_ARB_fragment_program GL_ARB_fragment_program_shadow</div>
</div>
<div class="a" style="left:1010px;top:613px;width:14px;height:76px;background:#cfcbc0"></div>
<div class="a sbb" style="left:1010px;top:613px;width:14px;height:14px"></div>
<svg class="a" style="left:1010px;top:613px" width="14" height="14"><path d="M3.2,8.5 L7.0,5.0 L10.8,8.5Z" fill="#a8a49a"/></svg>
<div class="a sbb" style="left:1010px;top:675px;width:14px;height:14px"></div>
<svg class="a" style="left:1010px;top:675px" width="14" height="14"><path d="M3.2,5.5 L7.0,9.0 L10.8,5.5Z" fill="#000"/></svg>
<div class="a sbt" style="left:1010px;top:627px;width:14px;height:31px"></div>
<div class="a" style="left:1014px;top:639px;width:6px;height:1px;background:#c4c0b5"></div>
<div class="a" style="left:1014px;top:641px;width:6px;height:1px;background:#c4c0b5"></div>
<div class="a" style="left:1014px;top:643px;width:6px;height:1px;background:#c4c0b5"></div>
<div class="a" style="left:3px;top:698px;white-space:pre;line-height:16px;font-size:13.18px">Translate Tool: translate objects and components</div>
<div class="a" style="left:367px;top:692px;width:2px;height:20px;border-left:1px solid #aca899;border-right:1px solid #fff"></div>
<div class="a" style="left:369px;top:692px;width:655px;height:1px;background:#aca899"></div>
<div class="a st" style="left:373px">x::</div>
<div class="a st" style="left:396px">232.0</div>
<div class="a st" style="left:436px">y::</div>
<div class="a st" style="left:459px">248.0</div>
<div class="a st" style="left:499px">z::</div>
<div class="a st" style="left:530px">0.0</div>
<div class="a" style="left:627px;top:692px;width:2px;height:20px;border-left:1px solid #aca899;border-right:1px solid #fff"></div>
<div class="a" style="left:713px;top:692px;width:2px;height:20px;border-left:1px solid #aca899;border-right:1px solid #fff"></div>
<div class="a" style="left:800px;top:692px;width:2px;height:20px;border-left:1px solid #aca899;border-right:1px solid #fff"></div>
<div class="a st" style="left:807px">G:8</div>
<div class="a st" style="left:836px">R:45</div>
<div class="a st" style="left:871px">C:13</div>
<div class="a st" style="left:906px">L:OFF</div>
</body></html>
